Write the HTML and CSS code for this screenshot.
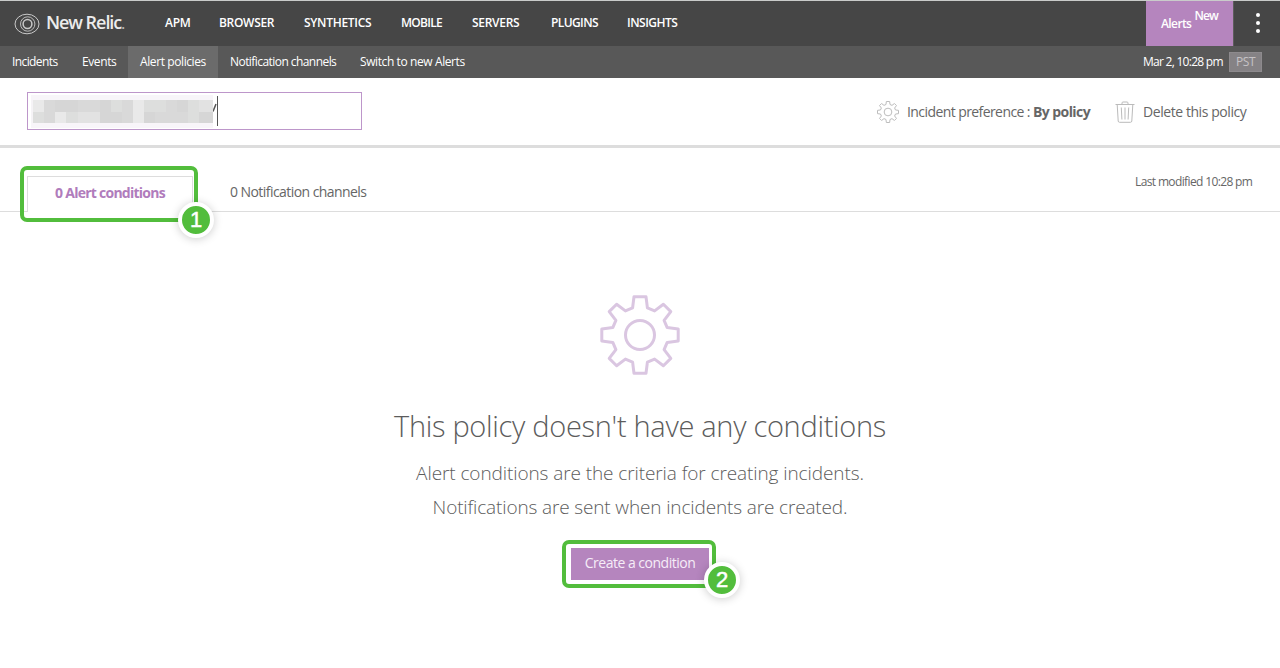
FILE: index.html
```
<!DOCTYPE html>
<html lang="en">
<head>
<meta charset="utf-8">
<title>Alert policies</title>
<link rel="stylesheet" href="styles.css">
</head>
<body>
<header class="topbar">
  <a class="brand">
    <svg class="brand-mark" viewBox="0 0 26 22" width="26" height="22"><g fill="none" stroke="#c9c9c9"><ellipse cx="13" cy="11" rx="12" ry="9.8" stroke-width="1"/><circle cx="13.7" cy="11" r="7.2" stroke-width=".9"/><circle cx="13.5" cy="11" r="4.4" stroke-width="1.5"/></g></svg>
    <span class="brand-name">New Relic<span class="brand-dot">.</span></span>
  </a>
  <nav class="products">
    <a class="apm">APM</a><a class="browser">BROWSER</a><a class="synthetics">SYNTHETICS</a><a class="mobile">MOBILE</a><a class="servers">SERVERS</a><a class="plugins">PLUGINS</a><a class="insights">INSIGHTS</a>
  </nav>
  <a class="alerts"><span>Alerts</span><span class="alerts-new">New</span></a>
  <div class="more"><i></i><i></i><i></i></div>
</header>
<nav class="subnav">
  <a class="s-incidents">Incidents</a><a class="s-events">Events</a><a class="s-policies active">Alert policies</a><a class="s-channels">Notification channels</a><a class="s-switch">Switch to new Alerts</a>
  <span class="clock">Mar 2, 10:28 pm</span><span class="zone">PST</span>
</nav>
<section class="policy">
  <div class="name-field">
    <div class="mask">
      <span class="edge"></span>
      <div class="cells">
        <i class="e"></i><i class="b"></i><i class="a"></i><i class="a"></i><i class="b"></i><i class="b"></i><i class="a"></i><i class="c"></i><i class="b"></i><i class="e"></i><i class="c"></i><i class="c"></i><i class="b"></i><i class="a"></i><i class="c"></i><i class="d"></i>
        <i class="c"></i><i class="b"></i><i class="e"></i><i class="c"></i><i class="d"></i><i class="d"></i><i class="a"></i><i class="a"></i><i class="b"></i><i class="e"></i><i class="a"></i><i class="b"></i><i class="b"></i><i class="b"></i><i class="c"></i><i class="a"></i>
      </div>
      <span class="edge"></span>
    </div>
    <svg class="tail" width="4" height="34" viewBox="0 0 4 34"><path d="M3 9L0 16.500" stroke="#555" stroke-width="1.500"/></svg>
    <span class="caret"></span>
  </div>
  <div class="action pref">
    <svg width="22" height="22" viewBox="0 0 80 80"><use href="#gear-small" stroke="#bbb" stroke-width="3.600"/></svg>
    <span class="pref-text">Incident preference : <b>By policy</b></span>
  </div>
  <div class="action del">
    <svg width="20" height="22" viewBox="0 0 20 22" fill="none" stroke="#bbb"><path d="M0.5 3.5H19.5M7 3V2Q7 1 8 1H12Q13 1 13 2V3M2.2 3.5L3.2 20Q3.3 21.3 4.5 21.3H15.5Q16.7 21.3 16.8 20L17.8 3.5M6.3 6.5L6.9 18.5M10 6.5V18.5M13.7 6.5L13.1 18.5"/></svg>
    <span class="del-text">Delete this policy</span>
  </div>
</section>
<section class="tabs">
  <div class="tab current"><span>0 Alert conditions</span><div class="highlight h1"></div><div class="step step1">1</div></div>
  <div class="tab other">0 Notification channels</div>
  <div class="modified">Last modified 10:28 pm</div>
</section>
<main class="empty">
  <svg class="empty-icon" width="80" height="80" viewBox="0 0 80 80"><defs><path id="gear-outline" d="M34 1.800H46L47.400 12.800 54.600 15.900 63.400 9.200 70.800 16.600 64.100 25.400 67.200 32.600 78.200 34V46L67.200 47.400 64.100 54.600 70.800 63.400 63.400 70.800 54.600 64.100 47.400 67.200 46 78.200H34L32.600 67.200 25.400 64.100 16.600 70.800 9.200 63.400 15.900 54.600 12.800 47.400 1.800 46V34L12.800 32.600 15.900 25.400 9.200 16.600 16.600 9.200 25.400 15.900 32.600 12.800Z"/><g id="gear" fill="none" stroke-linejoin="round"><use href="#gear-outline"/><circle cx="40" cy="40" r="14.500"/></g><g id="gear-small" fill="none" stroke-linejoin="round"><use href="#gear-outline"/><circle cx="40" cy="40" r="14"/></g></defs><use href="#gear" stroke="#dac6e1" stroke-width="3"/></svg>
  <h1><span>This policy doesn't have any conditions</span></h1>
  <p class="line1"><span>Alert conditions are the criteria for creating incidents.</span></p>
  <p class="line2"><span>Notifications are sent when incidents are created.</span></p>
  <div class="cta"><a class="button">Create a condition</a><div class="highlight h2"></div><div class="step step2">2</div></div>
</main>
</body>
</html>
```
FILE: styles.css
```
* { box-sizing: border-box; }
body { margin: 0; width: 1280px; height: 668px; overflow: hidden; background: #fff; color: #666; font-family: "Open Sans", sans-serif; white-space: nowrap; }
.topbar { display: flex; height: 46px; border-top: 1px solid #c9cbca; background: #464646; color: #fff; }
.brand { display: flex; width: 165px; height: 45px; padding-left: 14px; align-items: center; }
.brand-mark { margin-right: 6px; }
.brand-name { font: 600 18px/42px "Open Sans", sans-serif; color: #ececec; letter-spacing: -1.05px; padding-bottom: 2px; }
.brand-dot { font-size: 14px; color: #bbb; }
.products { display: flex; flex: 1; font-size: 12px; line-height: 44px; font-weight: 600; letter-spacing: -.3px; }
.apm { width: 54px; }
.browser { width: 85px; }
.synthetics { width: 97px; }
.mobile { width: 71px; letter-spacing: -.7px; }
.servers { width: 79px; }
.plugins { width: 76px; letter-spacing: -.6px; }
.insights { letter-spacing: -.5px; }
.alerts { display: flex; width: 88px; height: 45px; padding-left: 15px; border-right: 1px solid #5d5d5d; background: #b585be; font-size: 12px; line-height: 45px; font-weight: 600; letter-spacing: -.6px; }
.alerts-new { margin-left: 3px; line-height: 29px; letter-spacing: -.8px; }
.more { display: flex; width: 46px; flex-direction: column; align-items: center; gap: 4px; padding: 12px 0 0 2px; }
.more i { width: 4px; height: 4px; border-radius: 50%; background: #fff; }
.subnav { display: flex; height: 32px; background: #585858; color: #fff; font-size: 12px; line-height: 32px; letter-spacing: -.4px; }
.s-incidents { width: 70px; padding-left: 12px; letter-spacing: -.6px; }
.s-events { width: 58px; padding-left: 12px; }
.s-policies { width: 90px; padding-left: 12px; }
.s-channels { width: 130px; padding-left: 12px; letter-spacing: -.56px; }
.s-switch { padding-left: 12px; flex: 1; }
.active { background: #6b6b6b; }
.clock { width: 86px; letter-spacing: -.73px; }
.zone { width: 33px; height: 20px; margin: 6px 18px 0 0; border: 1px solid #8d8a8d; background: #858285; color: #c5c2c5; line-height: 18px; text-align: center; }
.policy { display: flex; height: 70px; padding: 14px 0 0 27px; border-bottom: 3px solid #ddd; font-size: 14px; letter-spacing: -.43px; }
.name-field { display: flex; width: 335px; height: 38px; padding: 2px 0 0 3px; border: 1px solid #bd96ca; margin-right: 515px; }
.mask { width: 182px; }
.edge { display: block; height: 5px; background: #f8f5f9; }
.cells { display: grid; grid-template-columns: 11px 11px 11px 12px 11px 11px 11px 11px 11px 11px 11px 11px 11px 11px 11px 14px; grid-template-rows: 12px 11px; padding-left: 2px; background: #f5f3f6; }
.cells .a { background: #d6d6d6; }
.cells .b { background: #d9d9d9; }
.cells .c { background: #dddedd; }
.cells .d { background: #e2e2e2; }
.cells .e { background: #e9e9e9; }
.caret { width: 1px; height: 30px; margin-top: 1px; background: #555; }
.action { display: flex; height: 38px; align-items: center; }
.pref { width: 238px; }
.pref-text { letter-spacing: -.58px; }
.pref svg { margin: 2px 8px 0 0; }
.del svg { margin: 2px 8px 0 0; }
.tabs { display: flex; height: 64px; border-bottom: 1px solid #ddd; padding-left: 27px; }
.current { position: relative; width: 166px; height: 36px; margin-top: 28px; border: 1px solid #ddd; border-bottom: 0; background: #fff; color: #b07cbc; font-size: 14px; font-weight: 700; line-height: 32px; letter-spacing: -.75px; text-align: center; }
.other { width: 905px; padding: 27px 0 0 37px; font-size: 14px; line-height: 34px; letter-spacing: -.56px; }
.modified { padding-left: 37px; padding-top: 22px; font-size: 12px; line-height: 24px; letter-spacing: -.63px; }
.highlight { position: absolute; border: 4px solid #52bd3c; border-radius: 7px; }
.h1 { left: -8px; top: -11px; width: 178px; height: 56px; }
.step { position: absolute; width: 36px; height: 36px; border: 4px solid #fff; border-radius: 50%; background: #52bd3c; box-shadow: 0 1px 10px rgba(0,0,0,.2); color: #fff; font: 400 22px/28px "Liberation Sans", sans-serif; -webkit-text-stroke: .5px #fff; letter-spacing: 0; text-align: center; }
.step1 { left: 150px; top: 25px; }
.empty { display: flex; flex-direction: column; align-items: center; padding-top: 83px; }
.empty h1, .empty p { margin: 0; }
.empty h1 { margin-top: 28px; height: 47px; font-size: 29px; line-height: 46px; font-weight: 300; letter-spacing: -.3px; color: #5c5c5c; }
.empty p { height: 34px; font-size: 19px; line-height: 36px; font-weight: 300; letter-spacing: -.09px; color: #5c5c5c; }
.empty .line1 { padding-top: 5px; margin-bottom: 5px; }
.empty .line2 { margin-top: -5px; padding-top: 5px; height: 39px; letter-spacing: -.14px; }
.cta { position: relative; margin-top: 20px; padding-top: 5px; }
.button { display: block; width: 138px; height: 32px; background: #b585be; color: #f6edf8; font-size: 14px; line-height: 30px; letter-spacing: -.5px; text-align: center; }
.h2 { left: -9px; top: -3px; width: 154px; height: 48px; }
.step2 { left: 133px; top: 19px; }
```
